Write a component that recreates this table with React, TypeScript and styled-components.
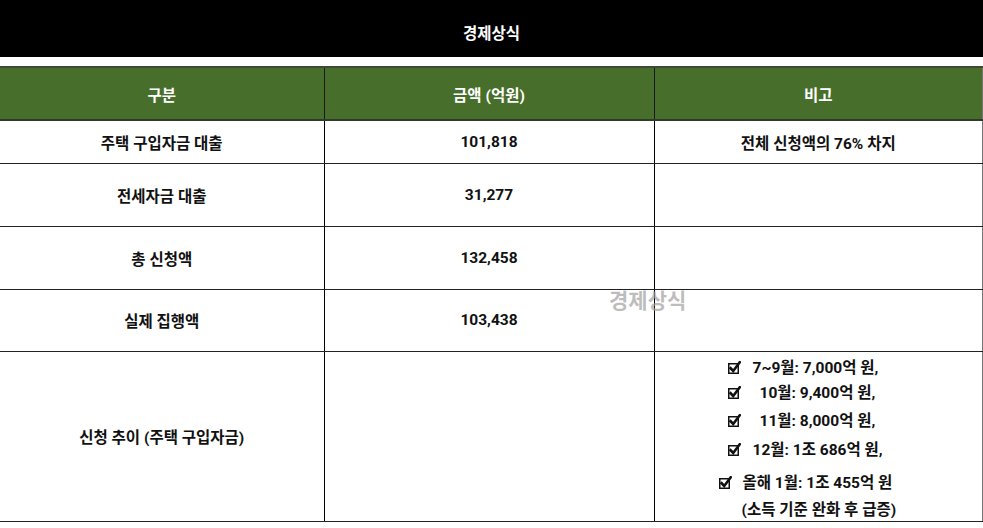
import React from "react";
import styled, {createGlobalStyle} from "styled-components";

const GlobalStyle = createGlobalStyle`
  html, body {
    margin: 0;
    padding: 0;
    background: #ffffff;
  }
  body {
    font-family: Roboto, "Noto Sans CJK KR", sans-serif;
  }
`

const rows = [
    {label: "주택 구입자금 대출", amount: "101,818", note: "전체 신청액의 76% 차지", height: 43},
    {label: "전세자금 대출", amount: "31,277", note: "", height: 63},
    {label: "총 신청액", amount: "132,458", note: "", height: 63},
    {label: "실제 집행액", amount: "103,438", note: "", height: 62},
]

// left: offset of the checkbox from the cell edge, gap: space before the text, mt: space above the line
const trend = [
    {text: "7~9월: 7,000억 원,", left: 73, gap: 12, mt: 6},
    {text: "10월: 9,400억 원,", left: 73, gap: 19, mt: 5},
    {text: "11월: 8,000억 원,", left: 73, gap: 19, mt: 8},
    {text: "12월: 1조 686억 원,", left: 73, gap: 12, mt: 9},
    {text: "올해 1월: 1조 455억 원", left: 64, gap: 11, mt: 13},
]

const CheckIcon = () => (
    <svg width="13" height="13" viewBox="0 0 13 13">
        <rect x="0.75" y="2.75" width="9.5" height="9.5" fill="none" stroke="#111" strokeWidth="1.5"/>
        <path d="M2.6 7.2 L5.2 10 L11.8 1.2" fill="none" stroke="#111" strokeWidth="2.6" strokeLinecap="square"/>
    </svg>
)

export default function App() {
    return (
        <Page>
            <GlobalStyle/>
            <TitleBar>경제상식</TitleBar>
            <TableWrap>
                <Table>
                    <colgroup>
                        <col style={{width: 324}}/>
                        <col style={{width: 330}}/>
                        <col/>
                    </colgroup>
                    <thead>
                    <tr>
                        <Th>구분</Th>
                        <Th>금액 (억원)</Th>
                        <Th>비고</Th>
                    </tr>
                    </thead>
                    <tbody>
                    {rows.map((r) => (
                        <Tr key={r.label} $h={r.height}>
                            <Td>{r.label}</Td>
                            <Td>{r.amount}</Td>
                            <Td>{r.note}</Td>
                        </Tr>
                    ))}
                    <Tr $h={170}>
                        <Td>신청 추이 (주택 구입자금)</Td>
                        <Td/>
                        <TopTd>
                            <CheckList>
                                {trend.map((t) => (
                                    <CheckItem key={t.text} $left={t.left} $mt={t.mt}>
                                        <CheckIcon/>
                                        <ItemText $gap={t.gap}>{t.text}</ItemText>
                                    </CheckItem>
                                ))}
                                <CheckItem $left={87} $mt={7}>(소득 기준 완화 후 급증)</CheckItem>
                            </CheckList>
                        </TopTd>
                    </Tr>
                    </tbody>
                </Table>
                <Watermark>경제상식</Watermark>
            </TableWrap>
        </Page>
    )
}

const Page = styled.div`
  width: 983px;
  height: 528px;
  overflow: hidden;
  background: #fff;
`

const TitleBar = styled.div`
  height: 57px;
  background: #000;
  color: #fff;
  display: flex;
  align-items: center;
  justify-content: center;
  font-size: 15.5px;
  font-weight: 700;
  padding-top: 6px;
  box-sizing: border-box;
`

const TableWrap = styled.div`
  position: relative;
  margin-top: 9px;
  width: 983px;
`

const Table = styled.table`
  width: 983px;
  border-collapse: collapse;
  table-layout: fixed;
  border-right: 1px solid #777;
`

const Th = styled.th`
  height: 51px;
  background: #476f2b;
  color: #fff;
  font-size: 15.5px;
  font-weight: 700;
  text-align: center;
  border-top: 2px solid #3d4a35;
  border-bottom: 2px solid #2f3a28;
  border-left: 1px solid #1a1a1a;
  padding: 0;
  &:first-child {
    border-left: none;
  }
`

const Tr = styled.tr<{ $h: number }>`
  height: ${(p) => p.$h}px;
`

const Td = styled.td`
  border-bottom: 1px solid #222;
  border-left: 1px solid #000;
  font-size: 15.5px;
  font-weight: 700;
  color: #111;
  text-align: center;
  vertical-align: middle;
  padding: 0;
  &:first-child {
    border-left: none;
  }
`

const TopTd = styled(Td)`
  vertical-align: top;
`

const CheckList = styled.div`
  display: flex;
  flex-direction: column;
  align-items: flex-start;
`

const CheckItem = styled.div<{ $left: number; $mt: number }>`
  display: flex;
  align-items: center;
  height: 20px;
  line-height: 20px;
  white-space: nowrap;
  margin-left: ${(p) => p.$left}px;
  margin-top: ${(p) => p.$mt}px;
`

const ItemText = styled.span<{ $gap: number }>`
  margin-left: ${(p) => p.$gap}px;
`

const Watermark = styled.div`
  position: absolute;
  left: 609px;
  top: 218px;
  font-size: 21px;
  font-weight: 700;
  color: rgba(160, 160, 160, 0.7);
  pointer-events: none;
  font-family: "Noto Sans CJK KR", sans-serif;
`
